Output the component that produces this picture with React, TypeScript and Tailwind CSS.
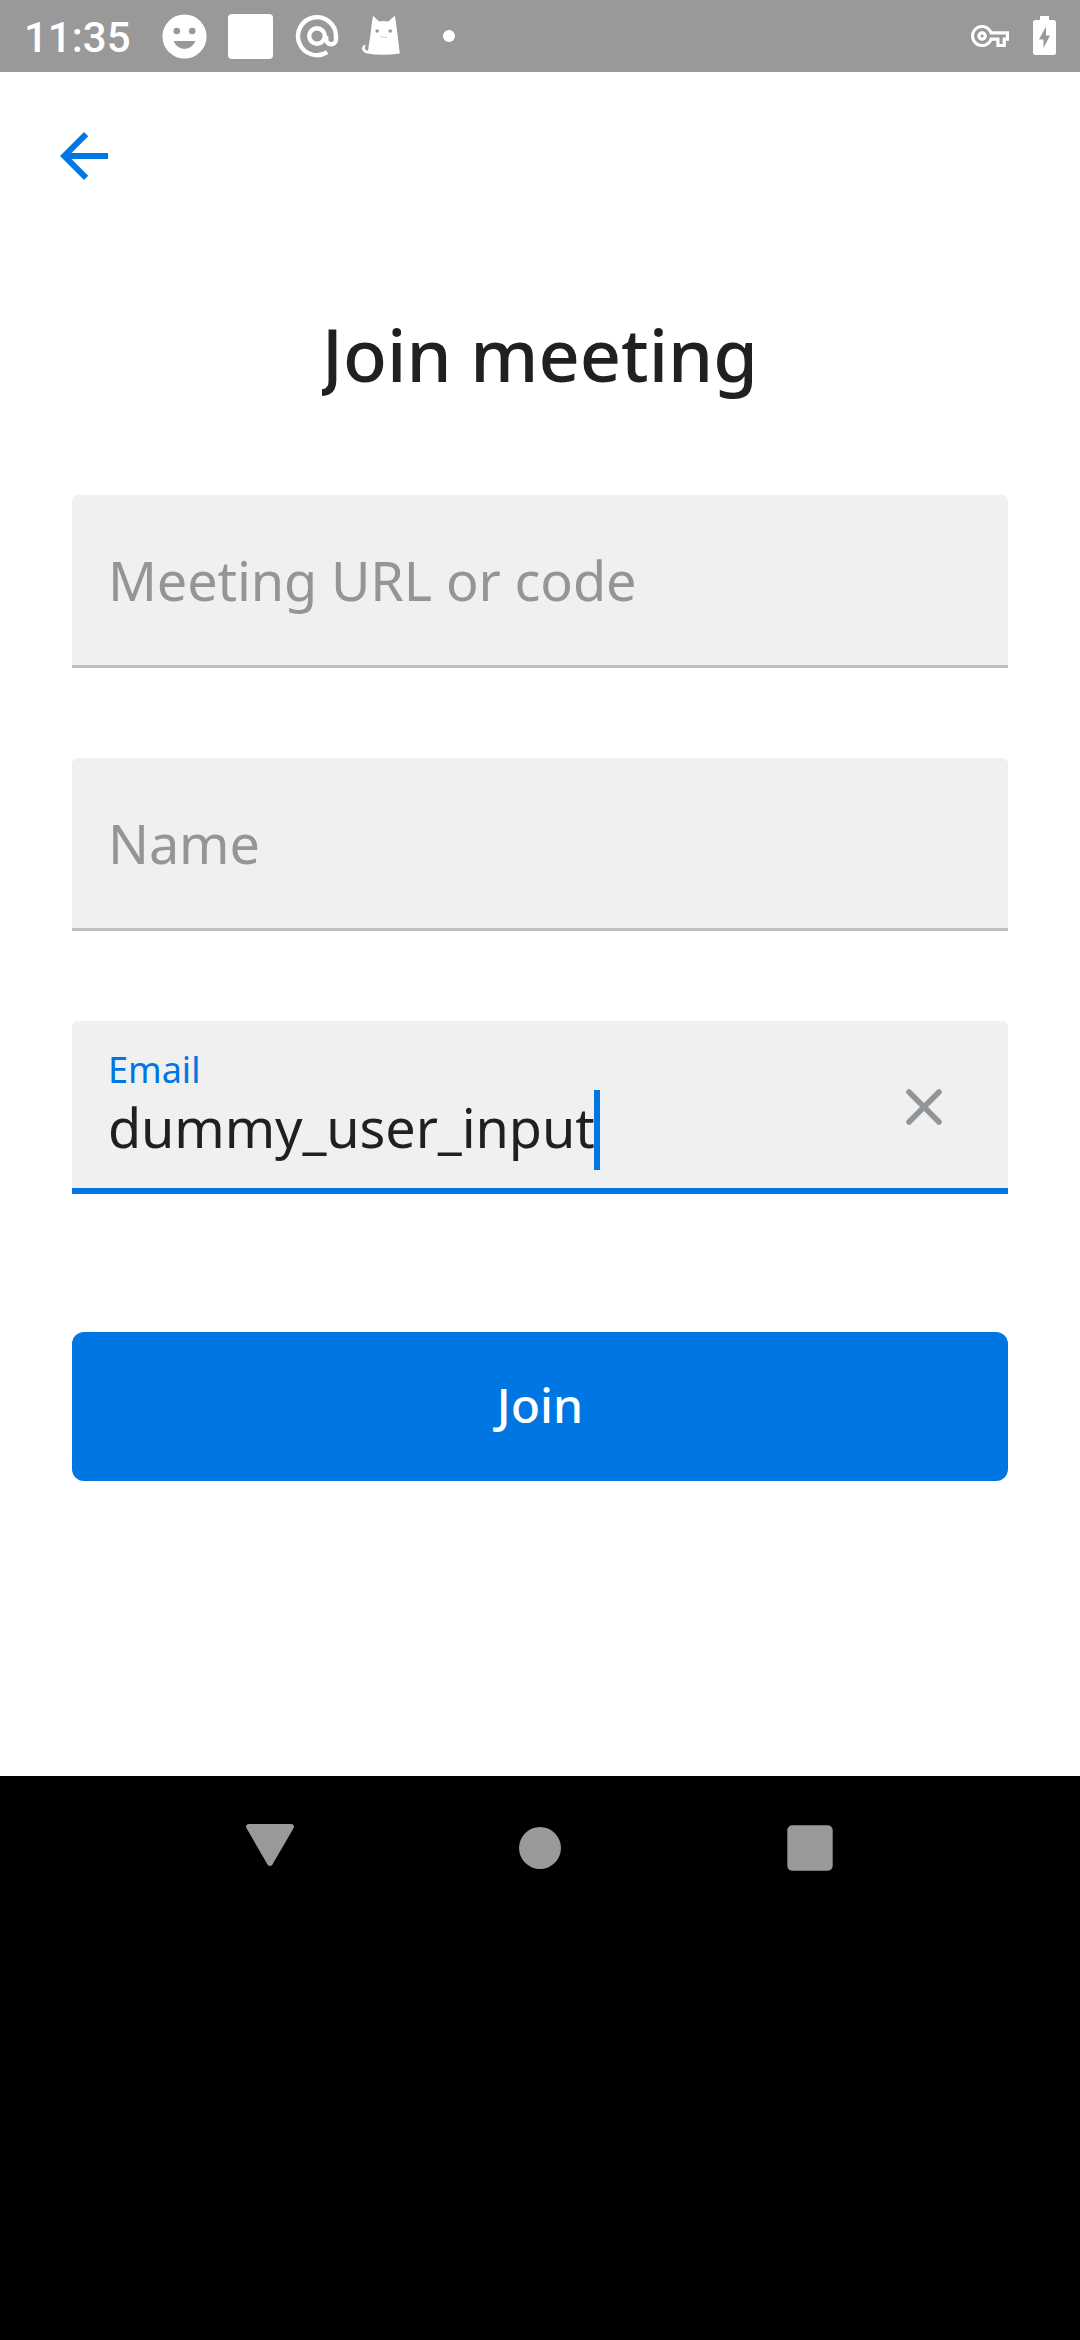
import React from "react";

function Smiley() {
  return (
    <svg className="size-[53px]" viewBox="0 0 24 24" fill="#fff" fillRule="evenodd">
      <path d="M12 2a10 10 0 1 0 0 20a10 10 0 1 0 0-20zM8.5 8a1.5 1.5 0 1 1 0 3a1.5 1.5 0 1 1 0-3zM15.5 8a1.5 1.5 0 1 1 0 3a1.5 1.5 0 1 1 0-3zM7.1 14h9.8c-.8 2.04-2.7 3.6-4.9 3.6s-4.1-1.56-4.9-3.6z" />
    </svg>
  );
}

function AtSign() {
  return (
    <svg className="h-[72px] w-[44px]" viewBox="295 0 44 72" fill="none" stroke="#fff" strokeWidth="4.4">
      <path d="M327.2 52.2A19 19 0 1 1 336 36v3.4a4.9 4.9 0 0 1-9.8 0V36" />
      <circle cx="317" cy="36" r="7.8" />
    </svg>
  );
}

function Cat() {
  return (
    <svg className="h-[72px] w-[40px]" viewBox="361 0 40 72">
      <path
        fill="#fff"
        d="M373 15.8L379.2 21.6Q383.8 20.6 388.4 21.6L394.8 15.8Q396.4 24 397.2 32L399.8 53.5Q392 54.8 383 54.8Q374 54.8 366 53.2Q362 51.2 362 48.2Q362.2 45.4 365.2 44.8Q366 45.6 365 46.8Q364 48.6 365.6 50L368 50.8Q369.4 42 370.8 32Q371.6 23 373 15.8z"
      />
      <circle cx="377.2" cy="31" r="1.8" fill="#999" />
      <circle cx="390.2" cy="31" r="1.8" fill="#999" />
      <path d="M380.5 37.2q1.6-.8 3.2 0t3.2 0" fill="none" stroke="#ccc" strokeWidth="1" />
    </svg>
  );
}

function Key() {
  return (
    <svg className="size-[38px]" viewBox="0 0 24 24" fill="#fff">
      <path d="M22 19h-6v-4h-2.68c-1.14 2.42-3.6 4-6.32 4-3.86 0-7-3.14-7-7s3.14-7 7-7c2.72 0 5.17 1.58 6.32 4H24v6h-2v4zm-4-2h2v-4h2v-2H11.94l-.23-.67C11.01 8.34 9.11 7 7 7c-2.76 0-5 2.24-5 5s2.24 5 5 5c2.11 0 4.01-1.34 4.71-3.33l.23-.67H18v4zM7 15c-1.65 0-3-1.35-3-3s1.35-3 3-3 3 1.35 3 3-1.35 3-3 3zm0-4c-.55 0-1 .45-1 1s.45 1 1 1 1-.45 1-1-.45-1-1-1z" />
    </svg>
  );
}

function Battery() {
  return (
    <svg className="h-[72px] w-[23px]" viewBox="1033 0 23 72">
      <path
        fill="#fff"
        fillRule="evenodd"
        d="M1040 16h9v4h4.5q2.5 0 2.5 2.5v30q0 2.5-2.5 2.5h-18q-2.5 0-2.5-2.5v-30q0-2.5 2.5-2.5h4.5zM1046 26.5l-7 13h4.5v8.5l6.5-12.5h-4z"
      />
    </svg>
  );
}

function StatusBar() {
  return (
    <div className="flex h-[72px] items-center bg-[#999999] text-white">
      <span className="mt-[3px] ml-[24px] w-[134px] font-['Roboto'] text-[42px] leading-[69px] font-medium">11:35</span>
      <Smiley />
      <span className="ml-[17px] size-[45px] rounded-[4px] bg-white" />
      <span className="ml-[22px]"><AtSign /></span>
      <span className="ml-[22px]"><Cat /></span>
      <span className="ml-[42px] size-[12px] rounded-full bg-white" />
      <span className="mr-[24px] ml-auto flex items-center gap-[24px]">
        <Key />
        <Battery />
      </span>
    </div>
  );
}

function EmptyField({ label }: { label: string }) {
  return (
    <div className="flex h-[173px] items-center rounded-t-[6px] border-b-[3px] border-[#bfbfbf] bg-[#f0f0f0] px-[36px] text-[54px] leading-[74px] tracking-[-0.12px] text-[#959595]">
      <span>{label}</span>
    </div>
  );
}

export default function App() {
  return (
    <div className="flex h-[2340px] w-[1080px] flex-col bg-black font-['Noto_Sans',sans-serif]">
      <StatusBar />
      <main className="flex h-[1704px] flex-col bg-white px-[72px] text-[#1f2021]">
        <svg className="mt-[48px] -ml-[24px] size-[72px]" viewBox="0 0 24 24" fill="#0076e3">
          <path d="M20 11H7.83l5.59-5.59L12 4l-8 8 8 8 1.41-1.41L7.83 13H20v-2z" />
        </svg>
        <h1 className="mx-auto mt-[113px] w-fit overflow-hidden text-[72px] leading-[98px] font-medium">Join meeting</h1>
        <div className="mt-[92px] flex flex-col gap-[90px]">
          <EmptyField label="Meeting URL or code" />
          <EmptyField label="Name" />
          <div className="flex h-[173px] items-start justify-between rounded-t-[6px] border-b-[6px] border-[#0076e3] bg-[#f0f0f0] pl-[36px]">
            <div className="pt-[24px]">
              <div className="text-[36px] leading-[49px] text-[#0076e3]">Email</div>
              <div className="-mt-[4px] flex items-start">
                <span className="text-[54px] leading-[74px] tracking-[-0.12px]">dummy_user_input</span>
                <span className="-ml-px h-[80px] w-[6px] bg-[#0076e3]" />
              </div>
            </div>
            <svg className="mt-[68px] mr-[66px] size-[36px]" viewBox="0 0 36 36" stroke="#919598" strokeWidth="5.6" strokeLinecap="round">
              <path d="M3 3l30 30M33 3L3 33" />
            </svg>
          </div>
        </div>
        <button className="mt-[138px] flex h-[149px] items-start justify-center rounded-[12px] bg-[#0076e3] pt-[40px] text-[48px] leading-[65px] font-medium text-white">
          Join
        </button>
      </main>
      <nav className="flex h-[144px] items-center justify-center gap-[222px]">
        <svg className="size-[48px]" viewBox="0 0 48 48" fill="#999">
          <path d="M3 0h42q4 .5 2.6 4L26.5 40.5q-2.5 3-5 0L.4 4Q-1 .5 3 0z" />
        </svg>
        <svg className="size-[48px]" viewBox="0 0 48 48" fill="#999">
          <circle cx="24" cy="24" r="21" />
        </svg>
        <svg className="size-[48px]" viewBox="0 0 48 48" fill="#999">
          <rect x="1.3" y="1.3" width="45.4" height="45.4" rx="5" />
        </svg>
      </nav>
    </div>
  );
}
